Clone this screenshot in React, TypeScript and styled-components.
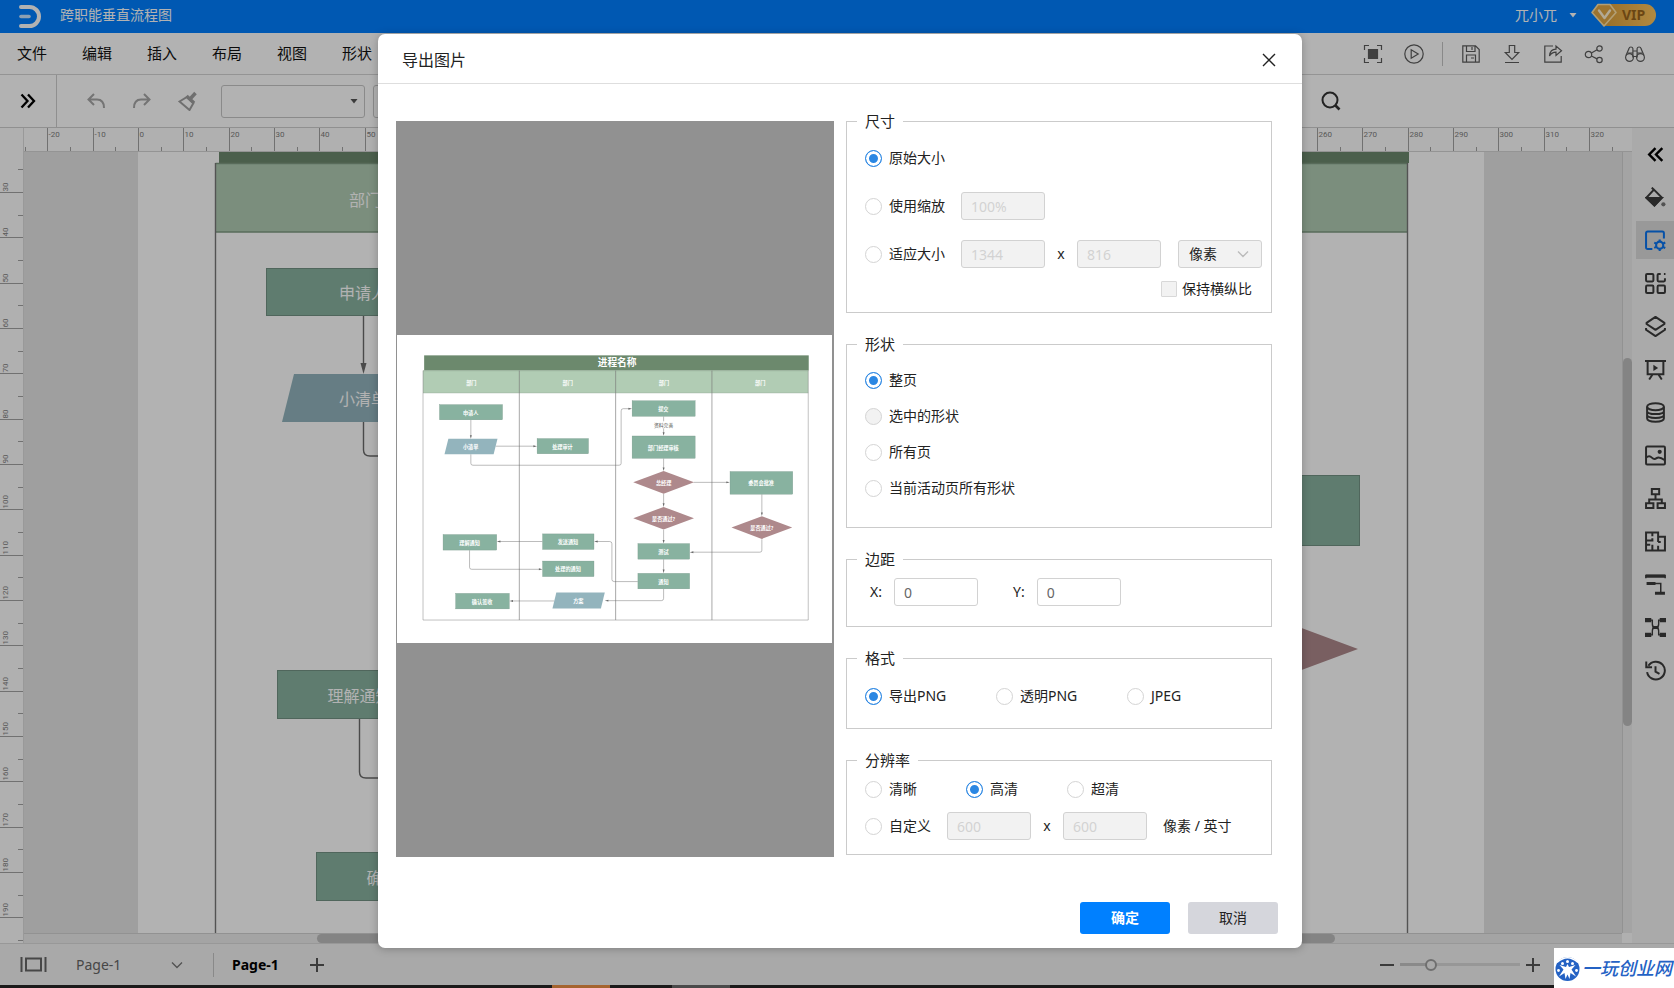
import React from 'react';
import styled, { createGlobalStyle, css } from 'styled-components';

const GlobalStyle = createGlobalStyle`
  *, *::before, *::after { box-sizing: border-box; }
  html, body, #root { height: 100%; }
  body {
    margin: 0;
    overflow: hidden;
    font-family: "Noto Sans", "Noto Sans CJK SC", sans-serif;
    font-size: 14px;
    line-height: 20px;
    color: #222;
  }
  button, input, select { font: inherit; color: inherit; margin: 0; }
  svg { display: block; }
`;

/* ---------- application frame ---------- */

const Shell = styled.div`
  display: flex;
  flex-direction: column;
  height: 100vh;
`;

const Editor = styled.div`
  position: relative;
  flex: 1;
  min-height: 0;
  display: flex;
  flex-direction: column;
  background: #fff;
`;

const TitleBar = styled.header`
  display: flex;
  align-items: center;
  height: 33px;
  padding: 0 18px;
  background: #007fff;
  color: #fff;
`;

const DocName = styled.span`
  margin-left: 18px;
  padding-bottom: 3px;
`;

const Account = styled.button`
  display: flex;
  align-items: center;
  gap: 12px;
  margin-left: auto;
  padding: 0 0 3px;
  border: 0;
  background: none;
  color: #fff;
`;

const VipBadge = styled.button`
  display: flex;
  align-items: center;
  gap: 5px;
  width: 65px;
  height: 22px;
  margin: 0 0 3px 14px;
  padding: 0;
  border: 0;
  border-radius: 4px 11px 11px 4px;
  background: linear-gradient(90deg, transparent 12px, #d99f3c 12px, #ffc55c);
  color: #9a651c;
  font-weight: 700;
`;

const MenuBar = styled.nav`
  display: flex;
  align-items: center;
  height: 42px;
  padding: 0 29px 0 17px;
  border-bottom: 1px solid #d4d4d4;
`;

const MenuList = styled.div`
  display: flex;
  gap: 35px;
`;

const MenuItem = styled.button`
  padding: 0 0 2px;
  border: 0;
  background: none;
  color: #111;
  font-size: 15px;
`;

const QuickActions = styled.div`
  display: flex;
  align-items: center;
  gap: 18px;
  margin-left: auto;
`;

const ActionGroup = styled.div`
  display: flex;
  gap: 21px;
`;

const IconButton = styled.button<{ $color?: string }>`
  display: grid;
  place-items: center;
  padding: 0;
  border: 0;
  background: none;
  color: ${(p) => p.$color || '#5c5c5c'};
`;

const Divider = styled.span<{ $height: number }>`
  width: 1px;
  height: ${(p) => p.$height}px;
  background: #c4c4c4;
`;

const ToolBar = styled.div`
  display: flex;
  align-items: center;
  height: 53px;
  border-bottom: 1px solid #cfcfcf;
`;

const ExpandCell = styled.div`
  display: grid;
  place-items: center;
  width: 57px;
  height: 100%;
  border-right: 1px solid #cdcdcd;
`;

const HistoryTools = styled.div`
  display: flex;
  gap: 26px;
  margin: 0 23px 0 29px;
`;

const SelectWrap = styled.span<{ $width: number }>`
  display: grid;
  align-items: center;
  width: ${(p) => p.$width}px;
  margin-right: 8px;

  & > * { grid-area: 1 / 1; }
  & > svg { justify-self: end; margin-right: 7px; pointer-events: none; }
`;

const ToolSelect = styled.select`
  appearance: none;
  width: 100%;
  height: 33px;
  padding: 0 10px;
  border: 1px solid #c6c6c6;
  border-radius: 3px;
  background: #fff;
`;

const SearchSlot = styled.div`
  margin-left: auto;
  margin-right: 333px;
`;

const Work = styled.div`
  flex: 1;
  min-height: 0;
  display: flex;
`;

const Stage = styled.main`
  flex: 1;
  min-width: 0;
  display: grid;
  grid-template-columns: 24px minmax(0, 1fr) 10px;
  grid-template-rows: 24px minmax(0, 1fr) 10px;
  background: #fcfcfc;
`;

const TopRuler = styled.div`
  grid-column: 2 / 4;
  overflow: hidden;
  border-bottom: 1px solid #d4d4d4;
`;

const SideRuler = styled.div`
  grid-column: 1;
  grid-row: 1 / 4;
  padding-top: 24px;
  overflow: hidden;
  border-right: 1px solid #dcdcdc;
`;

const Workspace = styled.div`
  grid-column: 2;
  grid-row: 2;
  display: flex;
  padding: 0 138px 0 114px;
  background: #e4e4e4;
  overflow: hidden;
`;

const Sheet = styled.div`
  flex: 1;
  min-width: 0;
  background: #fff;
`;

const ScrollTrack = styled.div<{ $vertical?: boolean }>`
  display: flex;
  flex-direction: ${(p) => (p.$vertical ? 'column' : 'row')};
  background: #ebebeb;
  ${(p) =>
    p.$vertical
      ? css`grid-column: 3; grid-row: 2; padding-top: 206px; border-left: 1px solid #d2d2d2;`
      : css`grid-column: 2; grid-row: 3; padding-left: 293px; border-top: 1px solid #d2d2d2;`}
`;

const ScrollThumb = styled.div<{ $length: string }>`
  flex: 0 0 ${(p) => p.$length};
  border-radius: 5px;
  background: #bdbdbd;
`;

const SideTools = styled.aside`
  display: flex;
  flex-direction: column;
  gap: 5px;
  width: 42px;
  padding: 7px 0 0 4px;
  background: #f4f4f4;
`;

const SideTool = styled.button<{ $active?: boolean; $strong?: boolean }>`
  display: grid;
  place-items: center;
  height: 38px;
  padding: 0;
  border: 0;
  background: ${(p) => (p.$active ? '#dbdbdb' : 'transparent')};
  color: ${(p) => (p.$active ? '#0a74f0' : p.$strong ? '#000' : '#3c3c3c')};
`;

const StatusBar = styled.footer`
  display: flex;
  align-items: center;
  height: 42px;
  padding: 0 0 0 20px;
  border-top: 1px solid #dadada;
  background: #f3f3f3;
`;

const PageSelect = styled(SelectWrap)`
  margin: 0 23px 0 29px;
`;

const PlainSelect = styled.select`
  appearance: none;
  width: 100%;
  padding: 0;
  border: 0;
  background: none;
  color: #666;
`;

const PageTab = styled.button`
  margin: 0 30px 0 18px;
  padding: 0;
  border: 0;
  background: none;
  color: #000;
  font-weight: 700;
`;

const ZoomControl = styled.div`
  display: flex;
  align-items: center;
  gap: 6px;
  margin-left: auto;
  margin-right: 134px;
`;

const ZoomSlider = styled.input`
  appearance: none;
  width: 120px;
  height: 12px;
  background: linear-gradient(90deg, #c6c6c6 30%, #d8d8d8 30%) center / 100% 3px no-repeat;

  &::-webkit-slider-thumb {
    appearance: none;
    width: 12px;
    height: 12px;
    border: 2px solid #a0a0a0;
    border-radius: 50%;
    background: #f3f3f3;
  }
`;

const TaskStrip = styled.div`
  display: flex;
  height: 3px;
  background: #1b1a1a;
`;

const TaskItem = styled.span<{ $left: number; $color: string }>`
  width: 58px;
  margin-left: ${(p) => p.$left}px;
  background: ${(p) => p.$color};
`;

const SiteMark = styled.a`
  position: absolute;
  right: 0;
  bottom: 0;
  z-index: 3;
  display: flex;
  align-items: center;
  gap: 1px;
  width: 120px;
  height: 40px;
  background: #fff;
  color: #2462c4;
  font-size: 18px;
  font-style: italic;
  font-weight: 500;
  text-decoration: none;
  white-space: nowrap;
`;

/* ---------- dialog ---------- */

const Scrim = styled.div`
  position: absolute;
  inset: 0;
  z-index: 2;
  display: grid;
  justify-items: center;
  align-items: start;
  padding: 34px 0 0 6px;
  background: rgba(0, 0, 0, 0.3);
`;

const Dialog = styled.section`
  width: 924px;
  max-width: 100%;
  border-radius: 7px;
  background: #fff;
  box-shadow: 0 1px 8px rgba(0, 0, 0, 0.25);
`;

const DialogHeader = styled.header`
  display: flex;
  align-items: center;
  justify-content: space-between;
  height: 50px;
  padding: 2px 26px 0 24px;
  border-bottom: 1px solid #dedede;
`;

const DialogTitle = styled.h2`
  margin: 0;
  font-size: 16px;
  font-weight: 400;
`;

const DialogBody = styled.div`
  display: flex;
  gap: 12px;
  padding: 27px 30px 0 18px;
`;

const Preview = styled.div`
  flex: 0 0 438px;
  display: flex;
  align-items: center;
  min-height: 736px;
  margin-top: 10px;
  padding: 0 2px 0 1px;
  background: #919191;
`;

const PreviewPage = styled.div`
  flex: 1;
  background: #fff;
`;

const Settings = styled.form`
  flex: 1;
  min-width: 0;
  display: flex;
  flex-direction: column;
  gap: 21px;
`;

const Group = styled.fieldset<{ $top: number; $bottom: number; $gap?: number }>`
  display: flex;
  flex-direction: column;
  gap: ${(p) => p.$gap || 0}px;
  min-width: 0;
  margin: 0;
  padding: ${(p) => p.$top}px 9px ${(p) => p.$bottom}px 18px;
  border: 1px solid #cbcbcb;
`;

const GroupTitle = styled.legend`
  margin-left: -8px;
  padding: 0 8px;
  font-size: 15px;
  line-height: 20px;
`;

const SizeRows = styled.div`
  display: flex;
  flex-direction: column;
  gap: 20px;
`;

const Row = styled.div<{ $height?: number }>`
  display: flex;
  align-items: center;
  min-height: ${(p) => p.$height || 20}px;
`;

const Option = styled.label<{ $width?: number }>`
  display: flex;
  align-items: center;
  gap: 7px;
  white-space: nowrap;
  ${(p) => p.$width && css`width: ${p.$width}px;`}
`;

const Radio = styled.input`
  appearance: none;
  flex: none;
  width: 17px;
  height: 17px;
  border: 1px solid #d4d4d4;
  border-radius: 50%;
  background: #fff;

  &:checked {
    border-color: #2b87e3;
    background: #2b87e3;
    box-shadow: inset 0 0 0 3px #fff;
  }
  &:disabled { background: #f2f2f2; }
`;

const TextBox = styled.input`
  width: 84px;
  height: 28px;
  padding: 1px 10px 0 9px;
  border: 1px solid #d2d2d2;
  border-radius: 3px;
  background: #fff;
  color: #666;

  &:disabled { background: #f2f2f2; color: #d2d2d2; }
`;

const Spacer = styled.span`
  width: 16px;
`;

const Times = styled.span`
  width: 32px;
  text-align: center;
`;

const UnitWrap = styled(SelectWrap)`
  margin: 0 0 0 17px;
  & > svg { margin-right: 13px; }
`;

const UnitSelect = styled.select`
  appearance: none;
  width: 100%;
  height: 28px;
  padding: 0 10px;
  border: 1px solid #d2d2d2;
  border-radius: 3px;
  background: #f2f2f2;
  opacity: 1;
  color: #222;
`;

const RatioOption = styled.label`
  display: flex;
  align-items: center;
  gap: 5px;
  margin: 11px 10px 0 auto;
`;

const Check = styled.input`
  appearance: none;
  width: 16px;
  height: 16px;
  border: 1px solid #d8d8d8;
  border-radius: 1px;
  background: #f2f2f2;
`;

const MarginField = styled.label`
  display: flex;
  align-items: center;
  gap: 12px;
  margin: 0 30px 0 5px;
`;

const Suffix = styled.span`
  margin-left: 16px;
`;

const DialogFooter = styled.footer`
  display: flex;
  justify-content: flex-end;
  gap: 18px;
  padding: 45px 24px 14px;
`;

const DialogButton = styled.button<{ $primary?: boolean }>`
  width: 90px;
  height: 32px;
  padding: 0;
  border: 0;
  border-radius: 3px;
  background: ${(p) => (p.$primary ? '#0080ff' : '#d5d6dc')};
  color: ${(p) => (p.$primary ? '#fff' : '#222')};
  font-weight: ${(p) => (p.$primary ? 700 : 400)};
`;

/* ---------- icons ---------- */

const Icon = ({
  size = 20,
  stroke = 1.2,
  children,
}: {
  size?: number;
  stroke?: number;
  children: React.ReactNode;
}) => (
  <svg width={size} height={size} viewBox="0 0 20 20" fill="none" stroke="currentColor" strokeWidth={stroke} aria-hidden="true">
    {children}
  </svg>
);

const Logo = () => (
  <svg width="24" height="26" viewBox="0 0 24 26" fill="none" stroke="#fff" strokeLinecap="round" aria-hidden="true">
    <path d="M3 3h8.500a9.500 9.500 0 0 1 0 19H3" strokeWidth="4" />
    <path d="M3 12.500h8" strokeWidth="3.600" strokeOpacity="0.8" />
  </svg>
);

const Caret = ({ color = '#555' }: { color?: string }) => (
  <svg width="8" height="5" viewBox="0 0 8 5" aria-hidden="true">
    <path d="M0.500 0h7L4 4.500z" fill={color} />
  </svg>
);

const Chevron = ({ color }: { color: string }) => (
  <svg width="12" height="8" viewBox="0 0 12 8" fill="none" stroke={color} strokeWidth="1.400" aria-hidden="true">
    <path d="M1 1.500l5 5 5-5" />
  </svg>
);

const VipGem = () => (
  <svg width="26" height="24" viewBox="0 0 26 24" fill="none" aria-hidden="true">
    <path d="M7 1.500h12l6 8L13 23 1 9.500z" fill="#e0a645" stroke="#ffe3a6" strokeWidth="1.600" strokeLinejoin="round" />
    <path d="M8 7.500l5.500 7.500L19 7.500" stroke="#fff2d5" strokeWidth="2.400" strokeLinecap="round" strokeLinejoin="round" />
  </svg>
);

const leftActions: [string, React.ReactNode][] = [
  ['适应窗口', (
    <>
      <path d="M1.500 6V1.500H6M14 1.500h4.500V6M18.500 14v4.500H14M6 18.500H1.500V14" />
      <path d="M5.500 5.500h9v9h-9z" fill="currentColor" />
    </>
  )],
  ['演示', (
    <>
      <circle cx="10" cy="10" r="9.200" />
      <path d="M7.200 5.800v8.400l7-4.200z" />
    </>
  )],
];

const rightActions: [string, React.ReactNode][] = [
  ['保存', <path d="M1.800 1.800h12.700l3.700 3.700v12.700H1.800zM5.500 1.800v5.700h8.500V1.800M11 3v3M5.500 18v-7h9v7M10 14h3" />],
  ['下载', <path d="M7.300 1.500h5.400v7h4L10 15.500 3.300 8.500h4zM3 18.500h14" />],
  ['导出', (
    <>
      <path d="M10 2H1.800v16.200h16.400V12" />
      <path d="M6.500 12c.4-4.500 2.800-6.800 6.500-6.800V2l5.500 4.700-5.500 4.700V8.200c-3 0-5 1.200-6.500 3.800z" />
    </>
  )],
  ['分享', (
    <>
      <circle cx="4.500" cy="10.500" r="3.200" />
      <circle cx="15.500" cy="4.500" r="2.700" />
      <circle cx="15.500" cy="16" r="2.700" />
      <path d="M7.400 9l5.700-3.200M7.400 12l5.700 2.900" />
    </>
  )],
  ['查找', (
    <>
      <circle cx="4.500" cy="13.500" r="3.900" />
      <circle cx="15.500" cy="13.500" r="3.900" />
      <path d="M1 11.500L4 4.500c.3-2 3.500-2 3.900 0v9M19 11.500l-3-7c-.3-2-3.500-2-3.900 0v9M7.900 7h4.200M7.900 12.500h4.200M3 9h4.500M12.500 9H17" />
    </>
  )],
];

const sideIcons: [string, React.ReactNode][] = [
  ['收起', <path d="M10 4L4 10l6 6M16.500 4l-6 6 6 6" strokeWidth="2.300" />],
  ['填充', (
    <>
      <path d="M6.500 0.500l2 2.500M8.500 2.500L16 10l-7 7.500L1.500 10z" />
      <path d="M1.500 10.500h14.500L9 17.800z" fill="currentColor" />
      <circle cx="17.500" cy="16.500" r="2" fill="#777" stroke="none" />
    </>
  )],
  ['页面设置', (
    <>
      <path d="M7 18.200H2.500a1.500 1.500 0 0 1-1.500-1.500V3A1.500 1.500 0 0 1 2.500 1.500H16.500A1.500 1.500 0 0 1 18 3v5" />
      <circle cx="14" cy="14.500" r="3.400" strokeWidth="2" />
      <path d="M14 9v2M14 18v2M8.800 12l2 .9M17.300 16.300l2 .9M8.800 17l2-.9M17.300 12.800l2-.9" strokeWidth="2" />
    </>
  )],
  ['图库', (
    <>
      <rect x="1" y="1" width="7" height="7" rx="1" />
      <rect x="1" y="12" width="7" height="7" rx="1" />
      <rect x="12" y="12" width="7" height="7" rx="1" />
      <path d="M15 1h-2a1 1 0 0 0-1 1v5a1 1 0 0 0 1 1h5a1 1 0 0 0 1-1V5M18 1h1.500" />
    </>
  )],
  ['图层', (
    <>
      <path d="M10 .8l8.500 5.800v1L10 13.200 1.500 7.600v-1z" strokeLinejoin="round" />
      <path d="M1 11.500v1.600l9 6.100 9-6.100v-1.600" />
    </>
  )],
  ['幻灯片', (
    <>
      <path d="M0 2h20M2.500 2v12.500h15V2M7 15l-3 4.500M13 15l3 4.500" />
      <path d="M8 5.500v6l4.500-3z" fill="currentColor" stroke="none" />
    </>
  )],
  ['数据', (
    <>
      <ellipse cx="10" cy="4.500" rx="8" ry="3.400" />
      <path d="M2 4.500v11c0 4.400 16 4.400 16 0v-11M2 8.500c0 4 16 4 16 0M2 12.200c0 4 16 4 16 0" />
    </>
  )],
  ['图片', (
    <>
      <rect x="1" y="1.500" width="18" height="17" rx="1" />
      <path d="M1 12c2.500-2 4-1.500 5.500 0s3 1.700 4.500.5 3-1.500 8 2" />
      <circle cx="14" cy="6.500" r="2" fill="currentColor" stroke="none" />
    </>
  )],
  ['组织结构', <path d="M6.500 1h7v5h-7zM10 6v5M4 14v-3h12v3M1 14.500h7v4.500H1zM12 14.500h7v4.500h-7z" />],
  ['平面图', <path d="M1 1.500h11.500v4H19v13H1zM1 9h7M7 1.500V5M12.500 5.500v5M7 13v5.500M1 13h4M12.500 14v4.500M12.500 10.500H15M7 9V7" />],
  ['格式', (
    <>
      <path d="M.8 4V1.500h18.400V4M9.500 9h5.500v9" strokeWidth="1.400" />
      <path d="M.8 2h18.400M1.500 9h8.500M9.500 18.300h9.500" strokeWidth="3" />
    </>
  )],
  ['思维导图', (
    <>
      <path d="M5 3h2v4c0 2 1 3 3 3s3-1 3-3V3h2M5 17h2v-4c0-2 1-3 3-3s3 1 3 3v4h2" strokeWidth="1.300" />
      <path d="M0 1h6v4H0zM14 1h6v4h-6zM0 15h6v4H0zM14 15h6v4h-6zM7 8.500h6v3H7z" fill="currentColor" stroke="none" />
    </>
  )],
  ['历史', (
    <>
      <path d="M2 11.500a8.500 8.500 0 1 0 1.200-6M1.200 1.500v5.300h5.500" />
      <path d="M10 6v5l3.800 2.200" />
    </>
  )],
];

/* ---------- flow chart ---------- */

const INK = '#6a6a6a';
const GREEN = '#88b2a0';
const BLUE = '#93b4bd';
const RED = '#ae898c';

const boxes: [number, number, number, number, string][] = [
  [266, 268, 196, 48, '申请人'],
  [568, 373, 160, 48, '处理审计'],
  [862, 256, 196, 49, '提交'],
  [862, 365, 196, 70, '部门经理审核'],
  [1165, 475, 195, 71, '委员会批准'],
  [880, 698, 161, 49, '测试'],
  [880, 790, 161, 49, '通知'],
  [277, 670, 167, 49, '理解通知'],
  [585, 668, 160, 49, '发送通知'],
  [585, 752, 160, 49, '处理的通知'],
  [316, 852, 167, 49, '确认签收'],
];

const slants: [number, number, number, number, string][] = [
  [282, 374, 164, 48, '小清单'],
  [616, 850, 162, 49, '方案'],
];

const diamonds: [number, number, string][] = [
  [960, 509, '总经理'],
  [960, 620, '是否通过?'],
  [1264, 649, '是否通过?'],
];

const links: { d: string; tip: [number, number, number] }[] = [
  { d: 'M363.500 316V366', tip: [363.5, 374, 90] },
  { d: 'M440 397H560', tip: [568, 397, 0] },
  { d: 'M363.500 422V450Q363.500 456 370 456H822Q828.500 456 828.500 450V288Q828.500 281 835 281H854', tip: [862, 281, 0] },
  { d: 'M960 305V357', tip: [960, 365, 90] },
  { d: 'M960 435V466', tip: [960, 474, 90] },
  { d: 'M1053 509H1157', tip: [1165, 509, 0] },
  { d: 'M960 544V577', tip: [960, 585, 90] },
  { d: 'M960 656V690', tip: [960, 698, 90] },
  { d: 'M960 747V782', tip: [960, 790, 90] },
  { d: 'M1264 546V605', tip: [1264, 613, 90] },
  { d: 'M1264 685V719Q1264 725 1258 725H1049', tip: [1041, 725, 180] },
  { d: 'M880 816H807Q800 816 800 809V699Q800 692 793 692H753', tip: [745, 692, 180] },
  { d: 'M585 692H452', tip: [444, 692, 180] },
  { d: 'M359.500 719V772Q359.500 778 366 778H577', tip: [585, 778, 0] },
  { d: 'M960 839V868Q960 875 953 875H786', tip: [778, 875, 180] },
  { d: 'M622 876H491', tip: [483, 876, 180] },
];

const ChartText = styled.text<{ $bold?: boolean }>`
  font-family: "Noto Sans CJK SC", "Noto Sans", sans-serif;
  font-weight: ${(p) => (p.$bold ? 700 : 400)};
  text-anchor: middle;
  dominant-baseline: central;
`;

type ChartProps = { viewBox: string; fit: string; overview?: boolean };

const FlowChart = ({ viewBox, fit, overview }: ChartProps) => (
  <svg width="100%" height={overview ? undefined : '100%'} viewBox={viewBox} preserveAspectRatio={fit} role="img" aria-label="跨职能垂直流程图">
    <rect x="219" y="116" width="1190" height="47" fill="#6c896d" />
    <rect x="215.500" y="163" width="1192" height="69" fill="#b1ccb4" />
    <path d="M215.500 163.500H1407.500M215.500 232H1407.500" stroke="#7f9a82" strokeWidth="1.400" />
    <path d="M215.500 163V935H1407.500V163" fill="none" stroke="#777" strokeWidth="1.400" />
    <path d="M513.500 163V935M811.500 163V935M1109.500 163V935" stroke="#777" strokeWidth={overview ? 2 : 1.4} />
    {overview && <ChartText x="816" y="138" fontSize="30" fill="#fff" $bold>进程名称</ChartText>}
    {[365, 663, 961, 1259].map((x) => (
      <ChartText key={x} x={x} y="199" fontSize="16" fill="#fff" $bold={overview}>部门</ChartText>
    ))}
    {links.map(({ d, tip: [x, y, a] }) => (
      <g key={d}>
        <path d={d} fill="none" stroke={INK} strokeWidth="1.400" />
        <path d="M0 0L-11 -3L-11 3Z" fill={INK} transform={`translate(${x} ${y}) rotate(${a})`} />
      </g>
    ))}
    {boxes.map(([x, y, w, h, label]) => (
      <g key={`${x}-${y}`}>
        <rect x={x + 0.5} y={y + 0.5} width={w - 1} height={h - 1} fill={GREEN} stroke="#739385" />
        <ChartText x={x + w / 2 - 1} y={y + h / 2} fontSize="16" fill="#fff" $bold={overview}>{label}</ChartText>
      </g>
    ))}
    {slants.map(([x, y, w, h, label]) => (
      <g key={`${x}-${y}`}>
        <path d={`M${x + 12} ${y}H${x + w}L${x + w - 12} ${y + h}H${x}Z`} fill={BLUE} />
        <ChartText x={x + w / 2 - 1} y={y + h / 2} fontSize="16" fill="#fff" $bold={overview}>{label}</ChartText>
      </g>
    ))}
    {diamonds.map(([x, y, label]) => (
      <g key={`${x}-${y}`}>
        <path d={`M${x - 94} ${y}L${x} ${y - 35}L${x + 94} ${y}L${x} ${y + 35}Z`} fill={RED} />
        <ChartText x={x} y={y} fontSize="16" fill="#fff" $bold={overview}>{label}</ChartText>
      </g>
    ))}
    <rect x="922" y="320" width="76" height="22" fill="#fff" />
    <ChartText x="960" y="331" fontSize="15" fill="#555">资料完善</ChartText>
  </svg>
);

/* ---------- rulers ---------- */

const STEP = 45.34;

const RulerText = styled.text`
  font-family: Roboto, sans-serif;
  font-size: 8px;
  fill: #808080;
`;

const HorizontalRuler = () => (
  <svg width="100%" height="24" stroke="#a2a2a2" aria-hidden="true">
    {Array.from({ length: 37 }, (_, i) => i - 3).map((n) => {
      const x = Math.round(114 + n * STEP) + 0.5;
      const mid = Math.round(114 + (n + 0.5) * STEP) + 0.5;
      return (
        <g key={n}>
          {x > 0 && n < 33 && <path d={`M${x} 0V24`} />}
          {mid < 1600 && <path d={`M${mid} 19V24`} />}
          {x > 0 && n < 33 && <RulerText x={x + 1} y="9" stroke="none">{n * 10}</RulerText>}
        </g>
      );
    })}
  </svg>
);

const VerticalRuler = () => (
  <svg width="24" height="100%" stroke="#a2a2a2" aria-hidden="true">
    {Array.from({ length: 18 }, (_, i) => i).map((n) => {
      const y = Math.round(40 + n * STEP) + 0.5;
      const mid = Math.round(40 + (n - 0.5) * STEP) + 0.5;
      return (
        <g key={n}>
          {n < 17 && <path d={`M0 ${y}H24`} />}
          <path d={`M18 ${mid}H24`} />
          {n < 17 && <RulerText transform={`translate(8 ${y - 1}) rotate(-90)`} stroke="none">{30 + n * 10}</RulerText>}
        </g>
      );
    })}
  </svg>
);

/* ---------- dialog content ---------- */

type RadioProps = { name: string; label: string; checked?: boolean; disabled?: boolean; width?: number };

const RadioOption = ({ name, label, checked, disabled, width }: RadioProps) => (
  <Option $width={width}>
    <Radio type="radio" name={name} defaultChecked={checked} disabled={disabled} />
    {label}
  </Option>
);

const ExportDialog = () => (
  <Dialog role="dialog" aria-modal="true" aria-labelledby="export-title">
    <DialogHeader>
      <DialogTitle id="export-title">导出图片</DialogTitle>
      <IconButton $color="#222" aria-label="关闭">
        <svg width="14" height="14" viewBox="0 0 14 14" stroke="currentColor" strokeWidth="1.400">
          <path d="M1 1l12 12M13 1L1 13" />
        </svg>
      </IconButton>
    </DialogHeader>

    <DialogBody>
      <Preview>
        <PreviewPage>
          <FlowChart viewBox="135 53 1346 950" fit="xMidYMid meet" overview />
        </PreviewPage>
      </Preview>

      <Settings id="export-form" onSubmit={(e) => e.preventDefault()}>
        <Group $top={13} $bottom={13}>
          <GroupTitle>尺寸</GroupTitle>
          <SizeRows>
            <Row $height={28}><RadioOption name="size" label="原始大小" checked /></Row>
            <Row $height={28}>
              <RadioOption name="size" label="使用缩放" />
              <Spacer />
              <TextBox aria-label="缩放比例" defaultValue="100%" disabled />
            </Row>
            <Row $height={28}>
              <RadioOption name="size" label="适应大小" />
              <Spacer />
              <TextBox aria-label="宽度" defaultValue="1344" disabled />
              <Times>x</Times>
              <TextBox aria-label="高度" defaultValue="816" disabled />
              <UnitWrap $width={84}>
                <UnitSelect aria-label="单位" disabled>
                  <option>像素</option>
                </UnitSelect>
                <Chevron color="#bbb" />
              </UnitWrap>
            </Row>
          </SizeRows>
          <RatioOption>
            <Check type="checkbox" disabled />
            保持横纵比
          </RatioOption>
        </Group>

        <Group $top={16} $bottom={29} $gap={16}>
          <GroupTitle>形状</GroupTitle>
          <Row><RadioOption name="range" label="整页" checked /></Row>
          <Row><RadioOption name="range" label="选中的形状" disabled /></Row>
          <Row><RadioOption name="range" label="所有页" /></Row>
          <Row><RadioOption name="range" label="当前活动页所有形状" /></Row>
        </Group>

        <Group $top={9} $bottom={20}>
          <GroupTitle>边距</GroupTitle>
          <Row $height={28}>
            <MarginField>X:<TextBox defaultValue="0" /></MarginField>
            <MarginField>Y:<TextBox defaultValue="0" /></MarginField>
          </Row>
        </Group>

        <Group $top={18} $bottom={22}>
          <GroupTitle>格式</GroupTitle>
          <Row>
            <RadioOption name="format" label="导出PNG" width={131} checked />
            <RadioOption name="format" label="透明PNG" width={131} />
            <RadioOption name="format" label="JPEG" />
          </Row>
        </Group>

        <Group $top={9} $bottom={14} $gap={13}>
          <GroupTitle>分辨率</GroupTitle>
          <Row>
            <RadioOption name="dpi" label="清晰" width={101} />
            <RadioOption name="dpi" label="高清" width={101} checked />
            <RadioOption name="dpi" label="超清" />
          </Row>
          <Row $height={28}>
            <RadioOption name="dpi" label="自定义" />
            <Spacer />
            <TextBox aria-label="水平分辨率" defaultValue="600" disabled />
            <Times>x</Times>
            <TextBox aria-label="垂直分辨率" defaultValue="600" disabled />
            <Suffix>像素 / 英寸</Suffix>
          </Row>
        </Group>
      </Settings>
    </DialogBody>

    <DialogFooter>
      <DialogButton $primary type="submit" form="export-form">确定</DialogButton>
      <DialogButton type="button">取消</DialogButton>
    </DialogFooter>
  </Dialog>
);

/* ---------- page ---------- */

export default function App() {
  return (
    <Shell>
      <GlobalStyle />
      <Editor>
        <TitleBar>
          <Logo />
          <DocName>跨职能垂直流程图</DocName>
          <Account>
            兀小兀
            <Caret color="#fff" />
          </Account>
          <VipBadge><VipGem />VIP</VipBadge>
        </TitleBar>

        <MenuBar>
          <MenuList>
            {['文件', '编辑', '插入', '布局', '视图', '形状'].map((m) => (
              <MenuItem key={m}>{m}</MenuItem>
            ))}
          </MenuList>
          <QuickActions>
            <ActionGroup>
              {leftActions.map(([name, art]) => (
                <IconButton key={name} aria-label={name}><Icon>{art}</Icon></IconButton>
              ))}
            </ActionGroup>
            <Divider $height={24} />
            <ActionGroup>
              {rightActions.map(([name, art]) => (
                <IconButton key={name} aria-label={name}><Icon>{art}</Icon></IconButton>
              ))}
            </ActionGroup>
          </QuickActions>
        </MenuBar>

        <ToolBar>
          <ExpandCell>
            <IconButton $color="#000" aria-label="展开">
              <Icon stroke={2.3}><path d="M3.500 3.500l6 6.500-6 6.500M10 3.500l6 6.500-6 6.500" /></Icon>
            </IconButton>
          </ExpandCell>
          <HistoryTools>
            <IconButton $color="#a6a6a6" aria-label="撤销">
              <Icon stroke={2}><path d="M8 3L2.500 8.500 8 14M2.500 8.500H11c4.500 0 7 3 7 8.500" /></Icon>
            </IconButton>
            <IconButton $color="#a6a6a6" aria-label="重做">
              <Icon stroke={2}><path d="M12 3l5.500 5.500L12 14M17.500 8.500H9c-4.500 0-7 3-7 8.500" /></Icon>
            </IconButton>
            <IconButton $color="#a0a0a0" aria-label="格式刷">
              <Icon stroke={2}>
                <path d="M1.500 10.500L9 6l6.500 6-4 7z" />
                <path d="M8.500 5l7.500 7M12.500 7.500l5-5.500" strokeWidth="3.500" />
              </Icon>
            </IconButton>
          </HistoryTools>
          <SelectWrap $width={144}>
            <ToolSelect aria-label="字体" />
            <Caret />
          </SelectWrap>
          <SelectWrap $width={70}>
            <ToolSelect aria-label="字号" />
            <Caret />
          </SelectWrap>
          <SearchSlot>
            <IconButton $color="#333" aria-label="搜索">
              <Icon stroke={2}>
                <circle cx="9" cy="9" r="7.500" />
                <path d="M14 14l4.500 4.500" strokeWidth="2.600" />
              </Icon>
            </IconButton>
          </SearchSlot>
        </ToolBar>

        <Work>
          <Stage>
            <SideRuler><VerticalRuler /></SideRuler>
            <TopRuler><HorizontalRuler /></TopRuler>
            <Workspace>
              <Sheet>
                <FlowChart viewBox="138 152 1346 782" fit="xMidYMin slice" />
              </Sheet>
            </Workspace>
            <ScrollTrack $vertical><ScrollThumb $length="64%" /></ScrollTrack>
            <ScrollTrack><ScrollThumb $length="78%" /></ScrollTrack>
          </Stage>
          <SideTools>
            {sideIcons.map(([name, art], i) => (
              <SideTool key={name} aria-label={name} $active={i === 2} $strong={i === 0}>
                <Icon size={21} stroke={1.9}>{art}</Icon>
              </SideTool>
            ))}
          </SideTools>
        </Work>

        <StatusBar>
          <IconButton $color="#666" aria-label="页面视图">
            <svg width="27" height="15" viewBox="0 0 27 15" fill="none" stroke="currentColor">
              <rect x="6" y="1.500" width="15" height="12" strokeWidth="2" />
              <path d="M1.500 0v15M25.500 0v15" strokeWidth="2" />
            </svg>
          </IconButton>
          <PageSelect $width={114}>
            <PlainSelect aria-label="当前页">
              <option>Page-1</option>
            </PlainSelect>
            <Chevron color="#777" />
          </PageSelect>
          <Divider $height={24} />
          <PageTab>Page-1</PageTab>
          <IconButton $color="#555" aria-label="添加页面">
            <svg width="16" height="16" viewBox="0 0 16 16" stroke="currentColor" strokeWidth="2">
              <path d="M8 1v14M1 8h14" />
            </svg>
          </IconButton>
          <ZoomControl>
            <IconButton $color="#555" aria-label="缩小">
              <svg width="14" height="14" viewBox="0 0 14 14" stroke="currentColor" strokeWidth="2">
                <path d="M0 7h14" />
              </svg>
            </IconButton>
            <ZoomSlider type="range" aria-label="缩放" min={0} max={100} defaultValue={23} />
            <IconButton $color="#555" aria-label="放大">
              <svg width="14" height="14" viewBox="0 0 14 14" stroke="currentColor" strokeWidth="2">
                <path d="M7 0v14M0 7h14" />
              </svg>
            </IconButton>
          </ZoomControl>
        </StatusBar>

        <Scrim>
          <ExportDialog />
        </Scrim>
      </Editor>

      <TaskStrip>
        <TaskItem $left={552} $color="#a5642f" />
        <TaskItem $left={62} $color="#4a4a4a" />
      </TaskStrip>

      <SiteMark href="#">
        <svg width="27" height="27" viewBox="0 0 27 27" aria-hidden="true">
          <circle cx="13.500" cy="14" r="12" fill="#2462c4" />
          <path d="M3 7.500Q13.500-2 24 7.500" fill="none" stroke="#fff" strokeWidth="1.600" />
          <path d="M13.500 9l1.500 3 6.500-2-4 4.500 4.500 7-5.500-3.500-1 6-2-4.500-2 4.500-1-6-5.500 3.500 4.500-7-4-4.500 6.500 2z" fill="#fff" />
          <circle cx="8.500" cy="8.500" r="1.500" fill="#fff" />
          <circle cx="13.500" cy="6.500" r="1.500" fill="#fff" />
          <circle cx="18.500" cy="8.500" r="1.500" fill="#fff" />
          <circle cx="4.500" cy="15.500" r="1.400" fill="#fff" />
          <circle cx="22.500" cy="15.500" r="1.400" fill="#fff" />
        </svg>
        一玩创业网
      </SiteMark>
    </Shell>
  );
}
